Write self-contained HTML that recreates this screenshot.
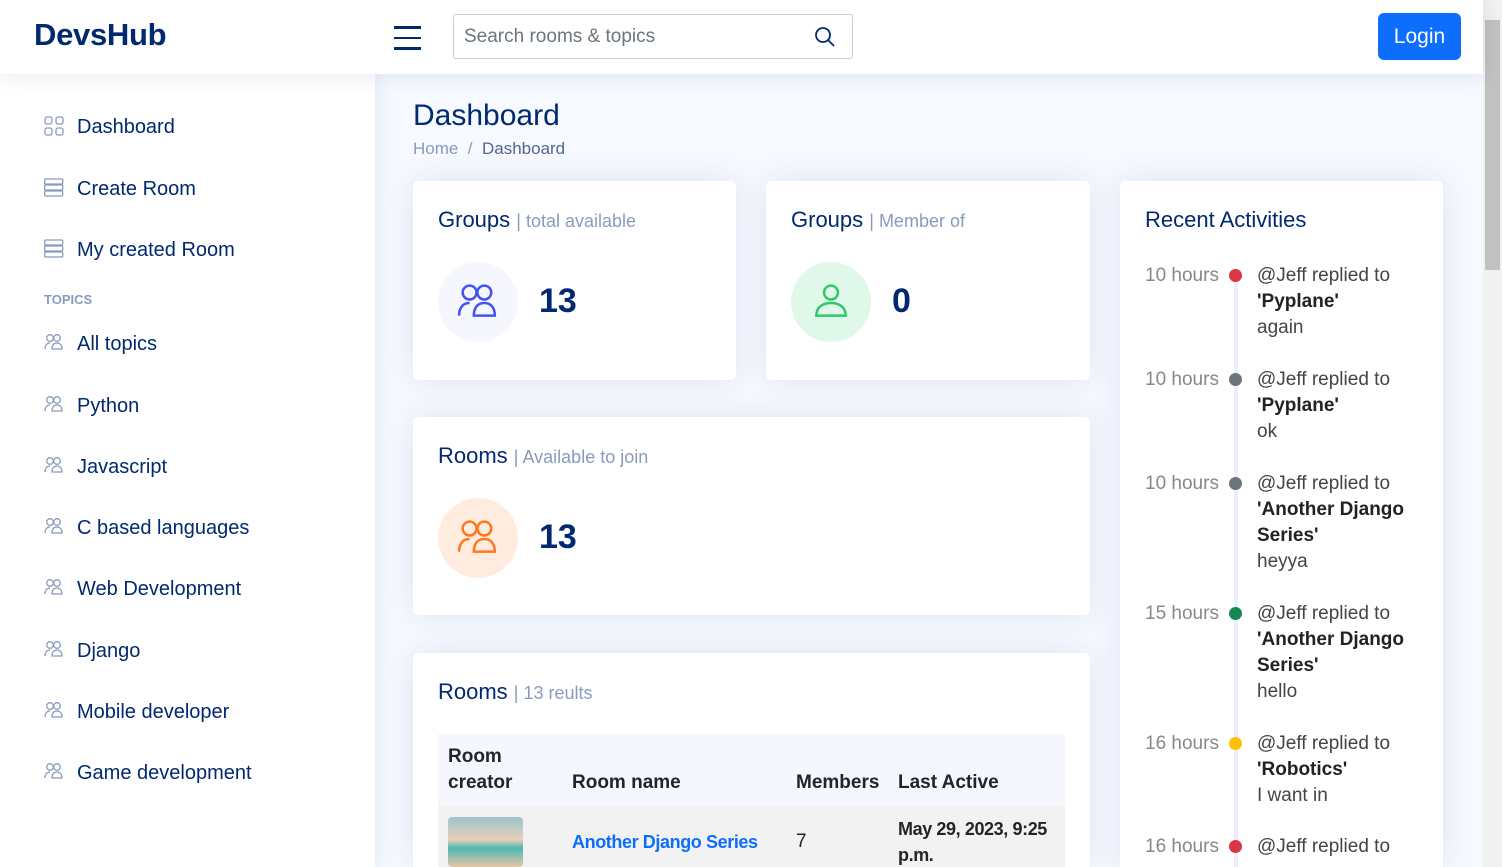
<!DOCTYPE html>
<html><head><meta charset="utf-8">
<style>
*{box-sizing:border-box;margin:0;padding:0}
html,body{width:1502px;height:867px;overflow:hidden}
body{font-family:"Liberation Sans",sans-serif;background:#f6f9ff;position:relative;color:#012970}
.hdr{position:absolute;left:0;top:0;width:1483px;height:74px;background:#fff;box-shadow:0 2px 20px rgba(1,41,112,.1);z-index:2}
.logo{position:absolute;left:34px;top:17px;font-size:31px;font-weight:bold;color:#012970;letter-spacing:-.3px}
.burger{position:absolute;left:394px;top:26px;width:27px}
.burger div{height:2.5px;background:#012970;margin-bottom:8px}
.search{position:absolute;left:453px;top:14px;width:400px;height:45px;border:1px solid #ccd;border-radius:3px;font-size:19px;color:#6c757d;padding:11px 10px}
.search svg{position:absolute;right:16px;top:11px}
.login{position:absolute;left:1378px;top:13px;width:83px;height:47px;background:#0d6efd;border-radius:6px;color:#fff;font-size:21px;text-align:center;line-height:47px}
.side{position:absolute;left:0;top:74px;width:375px;height:793px;background:#fff;box-shadow:0 0 20px rgba(1,41,112,.1)}
.it{position:absolute;left:44px;font-size:20px;color:#012970;height:24px;line-height:24px}
.it svg{position:absolute;left:0;top:2px}
.it span{position:absolute;left:33px;top:1px;white-space:nowrap}
.topics{position:absolute;left:44px;top:292px;font-size:13px;color:#899bbd;font-weight:bold}
.card{position:absolute;background:#fff;border-radius:5px;box-shadow:0 0 30px rgba(1,41,112,.1);overflow:hidden}
.ct{position:absolute;left:25px;font-size:22px;color:#012970;white-space:nowrap}
.ct small{font-size:18px;color:#899bbd}
.circ{position:absolute;left:25px;width:80px;height:80px;border-radius:50%}
.circ svg{position:absolute;left:19px;top:20px}
.num{position:absolute;left:126px;font-size:34px;font-weight:bold;color:#012970}
h1{position:absolute;left:413px;top:99px;font-size:30px;font-weight:normal;color:#012970}
.bc{position:absolute;left:413px;top:139px;font-size:17px;color:#899bbd}
.bc b{font-weight:normal;color:#51678f}
.ra{position:absolute;font-size:19px}
.tm{position:absolute;left:25px;color:#888;width:80px;white-space:nowrap;top:2px}
.dot{position:absolute;left:109px;width:13px;height:13px;border-radius:50%}
.tx{position:absolute;left:137px;color:#444;line-height:26px;width:180px}
.tx b{color:#222}
table{position:absolute;left:25px;top:81px;width:627px;border-collapse:collapse;font-size:19px;color:#212529;table-layout:fixed}
th{text-align:left;font-weight:bold;vertical-align:bottom;padding:10px;background:#f6f6fe;line-height:26px;white-space:nowrap}
td{background:#f2f2f2;padding:10px;line-height:26px;white-space:nowrap}
.sb{position:absolute;left:1483px;top:0;width:19px;height:867px;background:#f1f1f1}
.sb div{position:absolute;left:2px;top:20px;width:15px;height:250px;background:#c1c1c1}
</style></head><body>
<div class="hdr">
<div class="logo">DevsHub</div>
<div class="burger"><div></div><div></div><div></div></div>
<div class="search">Search rooms &amp; topics
<svg width="22" height="22" viewBox="0 0 22 22"><circle cx="9" cy="9" r="7" fill="none" stroke="#012970" stroke-width="1.8"/><line x1="14" y1="14" x2="20" y2="20" stroke="#012970" stroke-width="1.8"/></svg></div>
<div class="login">Login</div>
</div>
<div class="side"></div>
<svg width="0" height="0" style="position:absolute"><defs>
<g id="ppl"><circle cx="6" cy="5" r="3.3" fill="none" stroke="#899bbd" stroke-width="1.3"/><circle cx="13" cy="5" r="3.3" fill="none" stroke="#899bbd" stroke-width="1.3"/><path d="M1 16c0-4 2-6 5-6M8 16c0-4 2-6 5-6s5 2 5 6z" fill="none" stroke="#899bbd" stroke-width="1.3"/></g>
<g id="srv"><rect x="0.7" y="1" width="18" height="5" rx="1" fill="none" stroke="#899bbd" stroke-width="1.3"/><rect x="0.7" y="7" width="18" height="5" rx="1" fill="none" stroke="#899bbd" stroke-width="1.3"/><rect x="0.7" y="13" width="18" height="5" rx="1" fill="none" stroke="#899bbd" stroke-width="1.3"/></g>
</defs></svg>
<div class="it" style="top:114px"><svg width="20" height="20"><g fill="none" stroke="#899bbd" stroke-width="1.3"><rect x="1" y="1" width="7" height="7" rx="2"/><rect x="12" y="1" width="7" height="7" rx="2"/><rect x="1" y="12" width="7" height="7" rx="2"/><rect x="12" y="12" width="7" height="7" rx="2"/></g></svg><span>Dashboard</span></div>
<div class="it" style="top:176px"><svg width="20" height="20"><use href="#srv"/></svg><span>Create Room</span></div>
<div class="it" style="top:237px"><svg width="20" height="20"><use href="#srv"/></svg><span>My created Room</span></div>
<div class="topics">TOPICS</div>
<div class="it" style="top:331px"><svg width="20" height="20"><use href="#ppl"/></svg><span>All topics</span></div>
<div class="it" style="top:393px"><svg width="20" height="20"><use href="#ppl"/></svg><span>Python</span></div>
<div class="it" style="top:454px"><svg width="20" height="20"><use href="#ppl"/></svg><span>Javascript</span></div>
<div class="it" style="top:515px"><svg width="20" height="20"><use href="#ppl"/></svg><span>C based languages</span></div>
<div class="it" style="top:576px"><svg width="20" height="20"><use href="#ppl"/></svg><span>Web Development</span></div>
<div class="it" style="top:638px"><svg width="20" height="20"><use href="#ppl"/></svg><span>Django</span></div>
<div class="it" style="top:699px"><svg width="20" height="20"><use href="#ppl"/></svg><span>Mobile developer</span></div>
<div class="it" style="top:760px"><svg width="20" height="20"><use href="#ppl"/></svg><span>Game development</span></div>

<h1>Dashboard</h1>
<div class="bc">Home &nbsp;/&nbsp; <b>Dashboard</b></div>

<div class="card" style="left:413px;top:181px;width:323px;height:199px">
<div class="ct" style="top:26px">Groups <small>| total available</small></div>
<div class="circ" style="top:81px;background:#f6f6fe"><svg width="42" height="40" viewBox="0 0 20 19"><g stroke="#4154f1"><circle cx="6" cy="5" r="3.3" fill="none" stroke-width="1.2"/><circle cx="13" cy="5" r="3.3" fill="none" stroke-width="1.2"/><path d="M1 16c0-4 2-6 5-6M8 16c0-4 2-6 5-6s5 2 5 6z" fill="none" stroke-width="1.2"/></g></svg></div>
<div class="num" style="top:101px">13</div>
</div>
<div class="card" style="left:766px;top:181px;width:324px;height:199px">
<div class="ct" style="top:26px">Groups <small>| Member of</small></div>
<div class="circ" style="top:81px;background:#e0f8e9"><svg width="42" height="40" viewBox="0 0 20 19"><circle cx="10" cy="5" r="3.3" fill="none" stroke="#2eca6a" stroke-width="1.2"/><path d="M3 16c0-4 3-6 7-6s7 2 7 6z" fill="none" stroke="#2eca6a" stroke-width="1.2"/></svg></div>
<div class="num" style="top:101px">0</div>
</div>
<div class="card" style="left:413px;top:417px;width:677px;height:198px">
<div class="ct" style="top:26px">Rooms <small>| Available to join</small></div>
<div class="circ" style="top:81px;background:#ffecdf"><svg width="42" height="40" viewBox="0 0 20 19"><g stroke="#ff771d"><circle cx="6" cy="5" r="3.3" fill="none" stroke-width="1.2"/><circle cx="13" cy="5" r="3.3" fill="none" stroke-width="1.2"/><path d="M1 16c0-4 2-6 5-6M8 16c0-4 2-6 5-6s5 2 5 6z" fill="none" stroke-width="1.2"/></g></svg></div>
<div class="num" style="top:101px">13</div>
</div>
<div class="card" style="left:413px;top:653px;width:677px;height:214px;border-radius:5px 5px 0 0">
<div class="ct" style="top:26px">Rooms <small>| 13 reults</small></div>
<table><colgroup><col style="width:124px"><col style="width:224px"><col style="width:102px"><col></colgroup>
<tr><th>Room<br>creator</th><th>Room name</th><th>Members</th><th>Last Active</th></tr>
<tr><td><div style="width:75px;height:50px;border-radius:4px;background:linear-gradient(180deg,#9cc5cf 0%,#e8cfb8 45%,#4db8b0 62%,#e6c7a8 100%)"></div></td><td style="color:#0d6efd;font-weight:bold;font-size:18px;letter-spacing:-.4px">Another Django Series</td><td>7</td><td style="font-weight:bold;font-size:18px;letter-spacing:-.4px">May 29, 2023, 9:25<br>p.m.</td></tr></table>
</div>

<div class="card" style="left:1120px;top:181px;width:323px;height:686px;border-radius:5px 5px 0 0">
<div class="ct" style="top:26px">Recent Activities</div>
<div style="position:absolute;left:114px;top:100px;width:4px;height:700px;background:#eceefe"></div>
<div class="ra" style="top:82px;left:0;width:323px"><div class="tm">10 hours</div><div class="dot" style="top:6px;background:#dc3545"></div><div class="tx">@Jeff replied to<br><b>'Pyplane'</b><br>again</div></div>
<div class="ra" style="top:186px;left:0;width:323px"><div class="tm">10 hours</div><div class="dot" style="top:6px;background:#6c757d"></div><div class="tx">@Jeff replied to<br><b>'Pyplane'</b><br>ok</div></div>
<div class="ra" style="top:290px;left:0;width:323px"><div class="tm">10 hours</div><div class="dot" style="top:6px;background:#6c757d"></div><div class="tx">@Jeff replied to<br><b>'Another Django<br>Series'</b><br>heyya</div></div>
<div class="ra" style="top:420px;left:0;width:323px"><div class="tm">15 hours</div><div class="dot" style="top:6px;background:#198754"></div><div class="tx">@Jeff replied to<br><b>'Another Django<br>Series'</b><br>hello</div></div>
<div class="ra" style="top:550px;left:0;width:323px"><div class="tm">16 hours</div><div class="dot" style="top:6px;background:#ffc107"></div><div class="tx">@Jeff replied to<br><b>'Robotics'</b><br>I want in</div></div>
<div class="ra" style="top:653px;left:0;width:323px"><div class="tm">16 hours</div><div class="dot" style="top:6px;background:#dc3545"></div><div class="tx">@Jeff replied to</div></div>
</div>
<div class="sb"><div></div></div>
</body></html>
